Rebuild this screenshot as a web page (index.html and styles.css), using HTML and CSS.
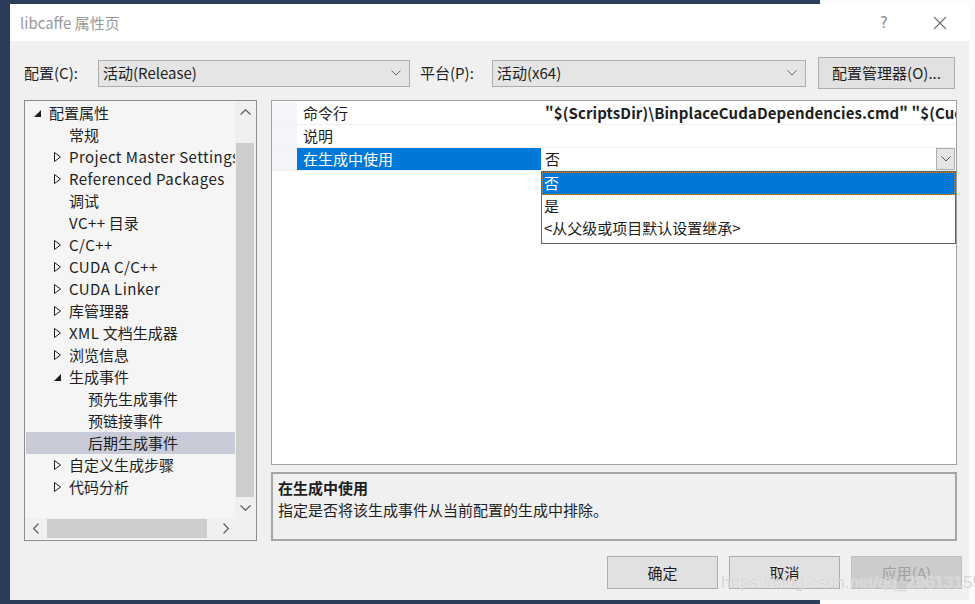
FILE: index.html
```html
<!DOCTYPE html>
<html lang="zh-CN">
<head>
  <meta charset="UTF-8" />
  <title>libcaffe 属性页</title>
  <link rel="stylesheet" href="styles.css">
</head>
<body>

  <div class="desk">
    <div class="side-pane"></div>

    <div class="dialog">
      <div class="titlebar">
        <span class="title">libcaffe 属性页</span>
        <span class="tb-help">?</span>
        <span class="tb-close">
          <svg width="14" height="14" viewBox="0 0 14 14"><path d="M1 1 L13 13 M13 1 L1 13" stroke="#6e6e6e" stroke-width="1.1" fill="none"/></svg>
        </span>
      </div>

      <div class="dlg-body">
        <!-- 配置 / 平台 -->
        <div class="config-row">
          <span class="lbl lbl-config">配置(C):</span>
          <div class="combo combo-config">
            <span>活动(Release)</span>
            <svg width="10" height="6" viewBox="0 0 10 6"><path d="M0.5 0.5 L5 5 L9.5 0.5" stroke="#6a6a6a" fill="none"/></svg>
          </div>
          <span class="lbl lbl-platform">平台(P):</span>
          <div class="combo combo-platform">
            <span>活动(x64)</span>
            <svg width="10" height="6" viewBox="0 0 10 6"><path d="M0.5 0.5 L5 5 L9.5 0.5" stroke="#6a6a6a" fill="none"/></svg>
          </div>
          <button class="btn btn-manager">配置管理器(O)...</button>
        </div>

        <div class="main">
          <!-- 左侧树 -->
          <div class="tree">
            <div class="tree-body">
              <div class="tree-rows">
                <div class="trow lv0"><span class="exp"><svg width="7" height="7" viewBox="0 0 7 7"><polygon points="7,0 7,7 0,7" fill="#1e1e1e"/></svg></span>配置属性</div>
                <div class="trow lv1"><span class="exp"></span>常规</div>
                <div class="trow lv1"><span class="exp"><svg width="7" height="10" viewBox="0 0 7 10"><polygon points="0.5,0.5 6.5,5 0.5,9.5" fill="none" stroke="#1e1e1e"/></svg></span><span class="latin">Project Master Settings</span></div>
                <div class="trow lv1"><span class="exp"><svg width="7" height="10" viewBox="0 0 7 10"><polygon points="0.5,0.5 6.5,5 0.5,9.5" fill="none" stroke="#1e1e1e"/></svg></span><span class="latin">Referenced Packages</span></div>
                <div class="trow lv1"><span class="exp"></span>调试</div>
                <div class="trow lv1"><span class="exp"></span><span class="latin">VC++</span>&nbsp;目录</div>
                <div class="trow lv1"><span class="exp"><svg width="7" height="10" viewBox="0 0 7 10"><polygon points="0.5,0.5 6.5,5 0.5,9.5" fill="none" stroke="#1e1e1e"/></svg></span><span class="latin">C/C++</span></div>
                <div class="trow lv1"><span class="exp"><svg width="7" height="10" viewBox="0 0 7 10"><polygon points="0.5,0.5 6.5,5 0.5,9.5" fill="none" stroke="#1e1e1e"/></svg></span><span class="latin">CUDA C/C++</span></div>
                <div class="trow lv1"><span class="exp"><svg width="7" height="10" viewBox="0 0 7 10"><polygon points="0.5,0.5 6.5,5 0.5,9.5" fill="none" stroke="#1e1e1e"/></svg></span><span class="latin">CUDA Linker</span></div>
                <div class="trow lv1"><span class="exp"><svg width="7" height="10" viewBox="0 0 7 10"><polygon points="0.5,0.5 6.5,5 0.5,9.5" fill="none" stroke="#1e1e1e"/></svg></span>库管理器</div>
                <div class="trow lv1"><span class="exp"><svg width="7" height="10" viewBox="0 0 7 10"><polygon points="0.5,0.5 6.5,5 0.5,9.5" fill="none" stroke="#1e1e1e"/></svg></span><span class="latin">XML</span>&nbsp;文档生成器</div>
                <div class="trow lv1"><span class="exp"><svg width="7" height="10" viewBox="0 0 7 10"><polygon points="0.5,0.5 6.5,5 0.5,9.5" fill="none" stroke="#1e1e1e"/></svg></span>浏览信息</div>
                <div class="trow lv1"><span class="exp"><svg width="7" height="7" viewBox="0 0 7 7"><polygon points="7,0 7,7 0,7" fill="#1e1e1e"/></svg></span>生成事件</div>
                <div class="trow lv2"><span class="exp"></span>预先生成事件</div>
                <div class="trow lv2"><span class="exp"></span>预链接事件</div>
                <div class="trow lv2 selected"><span class="exp"></span>后期生成事件</div>
                <div class="trow lv1"><span class="exp"><svg width="7" height="10" viewBox="0 0 7 10"><polygon points="0.5,0.5 6.5,5 0.5,9.5" fill="none" stroke="#1e1e1e"/></svg></span>自定义生成步骤</div>
                <div class="trow lv1"><span class="exp"><svg width="7" height="10" viewBox="0 0 7 10"><polygon points="0.5,0.5 6.5,5 0.5,9.5" fill="none" stroke="#1e1e1e"/></svg></span>代码分析</div>
              </div>
              <div class="vscroll">
                <div class="sb-btn"><svg width="11" height="6" viewBox="0 0 11 6"><path d="M0.5 5.5 L5.5 0.7 L10.5 5.5" stroke="#606060" stroke-width="1.2" fill="none"/></svg></div>
                <div class="vtrack"><div class="vthumb"></div></div>
                <div class="sb-btn"><svg width="11" height="6" viewBox="0 0 11 6"><path d="M0.5 0.5 L5.5 5.3 L10.5 0.5" stroke="#606060" stroke-width="1.2" fill="none"/></svg></div>
              </div>
            </div>
            <div class="hscroll">
              <div class="sb-btn"><svg width="6" height="11" viewBox="0 0 6 11"><path d="M5.5 0.5 L0.7 5.5 L5.5 10.5" stroke="#606060" stroke-width="1.2" fill="none"/></svg></div>
              <div class="htrack"><div class="hthumb"></div></div>
              <div class="sb-btn"><svg width="6" height="11" viewBox="0 0 6 11"><path d="M0.5 0.5 L5.3 5.5 L0.5 10.5" stroke="#606060" stroke-width="1.2" fill="none"/></svg></div>
              <div class="corner"></div>
            </div>
          </div>

          <!-- 右侧属性 -->
          <div class="right">
            <div class="grid">
              <div class="prow">
                <span class="margin"></span>
                <span class="pname">命令行</span>
                <span class="pval bold">"$(ScriptsDir)\BinplaceCudaDependencies.cmd" "$(CudaToolkitBinDir)" "$(CuDnnPath)" $(Platform) $(OutDir)</span>
              </div>
              <div class="prow">
                <span class="margin"></span>
                <span class="pname">说明</span>
                <span class="pval"></span>
              </div>
              <div class="prow active">
                <span class="margin"></span>
                <span class="pname">在生成中使用</span>
                <span class="pval edit">
                  <span>否</span>
                  <span class="drop-btn"><svg width="10" height="6" viewBox="0 0 10 6"><path d="M0.5 0.5 L5 5 L9.5 0.5" stroke="#555" fill="none"/></svg></span>
                </span>
              </div>

              <div class="dropdown">
                <div class="ditem picked">否</div>
                <div class="ditem">是</div>
                <div class="ditem">&lt;从父级或项目默认设置继承&gt;</div>
              </div>
            </div>

            <div class="desc">
              <div class="desc-title">在生成中使用</div>
              <div class="desc-text">指定是否将该生成事件从当前配置的生成中排除。</div>
            </div>
          </div>
        </div>

        <div class="buttons">
          <button class="btn btn-ok">确定</button>
          <button class="btn">取消</button>
          <button class="btn disabled">应用(A)</button>
        </div>
      </div>
    </div>

    <div class="watermark">https://blog.csdn.net/qq_29613155</div>
  </div>

</body>
</html>
```

FILE: styles.css
```css
body {
  margin: 0;
  font-family: "Noto Sans CJK SC", "Noto Sans", sans-serif;
  font-size: 15px;
  color: #1e1e1e;
}
.desk {
  position: relative;
  width: 975px;
  height: 604px;
  overflow: hidden;
  background: #2c3d5c;
}
.side-pane {
  position: absolute;
  left: 820px;
  top: 0;
  right: 0;
  bottom: 0;
  background: #fbfbfb;
}

/* Ventana */
.dialog {
  position: absolute;
  left: 10px;
  top: 4px;
  width: 959px;
  height: 596px;
  background: #f0f0f0;
  display: flex;
  flex-direction: column;
}
.titlebar {
  height: 37px;
  background: #fff;
  display: flex;
  align-items: center;
  padding-left: 10px;
}
.title {
  color: #9a9a9a;
  flex: 1;
  line-height: 20px;
}
.tb-help {
  color: #8a8a8a;
  font-family: "DejaVu Sans", sans-serif;
  font-size: 15px;
  width: 20px;
  text-align: center;
  margin-right: 39px;
}
.tb-close {
  display: flex;
  margin-right: 22px;
}

.dlg-body {
  flex: 1;
  padding: 16px 12px 0 14px;
  display: flex;
  flex-direction: column;
}

/* Fila superior */
.config-row {
  height: 32px;
  display: flex;
  align-items: center;
}
.lbl {
  line-height: 20px;
}
.lbl-config {
  width: 74px;
}
.lbl-platform {
  width: 72px;
  margin-left: 10px;
}
.combo {
  height: 27px;
  box-sizing: border-box;
  border: 1px solid #adadad;
  background: #e5e5e5;
  display: flex;
  align-items: center;
  justify-content: space-between;
  padding: 0 8px 0 4px;
  line-height: 20px;
}
.combo-config {
  width: 312px;
}
.combo-platform {
  width: 314px;
}
.btn {
  font-family: inherit;
  font-size: 15px;
  color: #1e1e1e;
  background: #e1e1e1;
  border: 1px solid #adadad;
  padding: 0;
  line-height: 20px;
}
.btn-manager {
  width: 137px;
  height: 32px;
  margin-left: 12px;
}

.main {
  margin-top: 11px;
  display: flex;
  gap: 14px;
}

/* Arbol */
.tree {
  width: 233px;
  height: 441px;
  box-sizing: border-box;
  border: 1px solid #8a8d94;
  background: #f5f5f5;
  display: flex;
  flex-direction: column;
}
.tree-body {
  height: 417px;
  display: flex;
}
.tree-rows {
  width: 210px;
  padding-top: 1px;
  overflow: hidden;
}
.trow {
  height: 22px;
  line-height: 22px;
  display: flex;
  align-items: center;
  white-space: nowrap;
}
.trow .latin {
  letter-spacing: 0.45px;
}
.trow.lv0 { padding-left: 9px; }
.trow.lv1 { padding-left: 29px; }
.trow.lv2 { padding-left: 48px; }
.trow.selected {
  background: #c9cbd9;
  margin-left: 1px;
  padding-left: 47px;
}
.exp {
  width: 15px;
  flex: none;
  display: flex;
  align-items: center;
}
.vscroll {
  width: 21px;
  display: flex;
  flex-direction: column;
  background: #f0f0f0;
}
.sb-btn {
  height: 21px;
  width: 21px;
  flex: none;
  display: flex;
  align-items: center;
  justify-content: center;
}
.vtrack {
  flex: 1;
  padding: 21px 2px 0 1px;
  display: flex;
}
.vthumb {
  flex: 1;
  background: #cdcdcd;
}
.hscroll {
  height: 21px;
  display: flex;
  background: #f0f0f0;
}
.htrack {
  width: 165px;
  padding: 1px 3px 1px 1px;
  display: flex;
}
.hthumb {
  width: 160px;
  background: #cdcdcd;
}
.corner {
  flex: 1;
  background: #f0f0f0;
}

/* Propiedades */
.right {
  width: 686px;
  display: flex;
  flex-direction: column;
  gap: 7px;
}
.grid {
  position: relative;
  height: 365px;
  box-sizing: border-box;
  border: 1px solid #a0a0a0;
  background: #fff;
  padding-top: 1px;
}
.prow {
  display: grid;
  grid-template-columns: 25px 244px 1fr;
  height: 22px;
  line-height: 22px;
  border-bottom: 1px solid #f0f0f0;
}
.prow .margin {
  background: #f3f5f9;
}
.pname {
  padding-left: 6px;
  white-space: nowrap;
}
.pval {
  padding-left: 4px;
  white-space: nowrap;
  overflow: hidden;
}
.bold {
  font-weight: bold;
  letter-spacing: 0.1px;
}
.prow.active .pname {
  background: #0078d7;
  color: #fff;
}
.pval.edit {
  display: flex;
  justify-content: space-between;
  padding-right: 1px;
}
.drop-btn {
  width: 19px;
  height: 22px;
  box-sizing: border-box;
  border: 1px solid #adadad;
  background: #e5e5e5;
  display: flex;
  align-items: center;
  justify-content: center;
}
.dropdown {
  position: absolute;
  left: 269px;
  top: 70px;
  width: 415px;
  box-sizing: border-box;
  border: 1px solid #646464;
  background: #fff;
  padding-bottom: 4px;
}
.ditem {
  height: 22px;
  line-height: 22px;
  padding-left: 2px;
  white-space: nowrap;
}
.ditem.picked {
  background: #0078d7;
  color: #fff;
  height: 23px;
  outline: 1px dotted #c98a3a;
  outline-offset: -1px;
}

.desc {
  height: 69px;
  box-sizing: border-box;
  border: 2px solid #a6a6a6;
  background: #f0f0f0;
  padding: 3px 0 0 5px;
  line-height: 22px;
}
.desc-title {
  font-weight: bold;
}

/* Botones */
.buttons {
  margin-top: 15px;
  margin-right: -5px;
  display: flex;
  justify-content: flex-end;
  gap: 11px;
}
.buttons .btn {
  width: 111px;
  height: 33px;
}
.btn.disabled {
  background: #cccccc;
  border-color: #bfbfbf;
  color: #a0a0a0;
}

.watermark {
  position: absolute;
  left: 721px;
  top: 573px;
  font-family: "Liberation Sans", sans-serif;
  font-size: 17px;
  color: rgba(205, 205, 205, 0.85);
  text-shadow: 0 0 1px #fff;
  white-space: nowrap;
}
```
